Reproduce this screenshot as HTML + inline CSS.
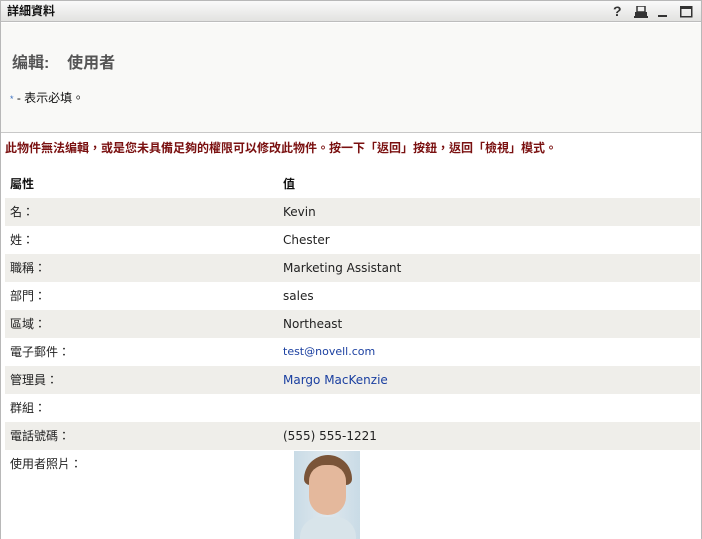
<!DOCTYPE html>
<html><head><meta charset="utf-8"><style>
*{margin:0;padding:0;box-sizing:border-box}
body{width:702px;height:539px;background:#fff;font-family:"Liberation Sans","Noto Sans CJK TC",sans-serif;position:relative;overflow:hidden;font-size:12px;color:#222}
.frame{position:absolute;left:0;top:0;width:702px;height:539px;border:1px solid #b8b8b8;border-bottom:none}
.title{position:absolute;left:1px;top:1px;width:700px;height:21px;background:linear-gradient(#fafafa,#e2e2e0);border-bottom:1px solid #bdbdbd;font-weight:bold;font-size:12px;line-height:20px;padding-left:6px;color:#111}
.hdr{position:absolute;left:1px;top:23px;width:700px;height:110px;background:#f9f9f7;border-bottom:1px solid #c8c8c8}
.ico{position:absolute;top:4px}
.row{position:absolute;left:5px;width:695px;height:28px;line-height:28px}
.g{background:#efeeea}
.l{position:absolute;left:5px}
.v{position:absolute;left:278px;font-family:"DejaVu Sans",sans-serif;font-size:12px}
.a{color:#1a3fa0}
</style></head><body>
<div class="frame"></div>
<div class="title">詳細資料</div>
<svg class="ico" style="left:612px" width="12" height="14" viewBox="0 0 12 14"><text x="1" y="12" font-family="Liberation Sans" font-weight="bold" font-size="14" fill="#333">?</text></svg>
<svg class="ico" style="left:634px;top:6px" width="14" height="12" viewBox="0 0 14 12"><rect x="3" y="0" width="8" height="6" fill="none" stroke="#333" stroke-width="1.5"/><rect x="1" y="6" width="12" height="4" fill="#333"/><rect x="0" y="10" width="14" height="2" fill="#333"/></svg>
<svg class="ico" style="left:658px" width="10" height="14"><rect x="0" y="11" width="9" height="2" fill="#333"/></svg>
<svg class="ico" style="left:680px;top:6px" width="13" height="12"><rect x="0.75" y="0.75" width="11" height="10" fill="none" stroke="#333" stroke-width="1.5"/><rect x="0" y="0" width="12" height="3" fill="#333"/></svg>
<div class="hdr"></div>
<div style="position:absolute;left:12px;top:49px;font-size:16px;color:#555;font-weight:bold">编輯:&nbsp;&nbsp;&nbsp;&nbsp;使用者</div>
<div style="position:absolute;left:10px;top:89px;font-size:12px;color:#111"><span style="color:#3a6fc0;font-size:9px">*</span> - 表示必填。</div>
<div style="position:absolute;left:5px;top:139px;font-size:12px;font-weight:bold;color:#7a1010">此物件無法编輯，或是您未具備足夠的權限可以修改此物件。按一下「返回」按鈕，返回「檢視」模式。</div>
<div class="row" style="top:170px;font-weight:bold;color:#111"><span class="l">屬性</span><span class="v" style="font-family:'Liberation Sans','Noto Sans CJK TC',sans-serif;font-size:12px">值</span></div>
<div class="row g" style="top:198px"><span class="l">名：</span><span class="v">Kevin</span></div>
<div class="row" style="top:226px"><span class="l">姓：</span><span class="v">Chester</span></div>
<div class="row g" style="top:254px"><span class="l">職稱：</span><span class="v">Marketing Assistant</span></div>
<div class="row" style="top:282px"><span class="l">部門：</span><span class="v">sales</span></div>
<div class="row g" style="top:310px"><span class="l">區域：</span><span class="v">Northeast</span></div>
<div class="row" style="top:338px"><span class="l">電子郵件：</span><span class="v a" style="font-size:11px">test@novell.com</span></div>
<div class="row g" style="top:366px"><span class="l">管理員：</span><span class="v a">Margo MacKenzie</span></div>
<div class="row" style="top:394px"><span class="l">群組：</span></div>
<div class="row g" style="top:422px"><span class="l">電話號碼：</span><span class="v">(555) 555-1221</span></div>
<div class="row" style="top:450px;line-height:28px"><span class="l" style="top:0;line-height:28px">使用者照片：</span></div>
<div style="position:absolute;left:294px;top:451px;width:66px;height:88px;background:linear-gradient(90deg,#c9dbe6,#dfe8ee 50%,#c9dbe6)">
<div style="position:absolute;left:10px;top:4px;width:48px;height:30px;border-radius:24px 24px 6px 6px;background:#7a5438"></div>
<div style="position:absolute;left:15px;top:14px;width:37px;height:50px;border-radius:16px 16px 18px 18px;background:#e4b89c"></div>
<div style="position:absolute;left:6px;top:66px;width:56px;height:22px;border-radius:20px 20px 0 0;background:#d8e4ea"></div>
</div>
</body></html>
